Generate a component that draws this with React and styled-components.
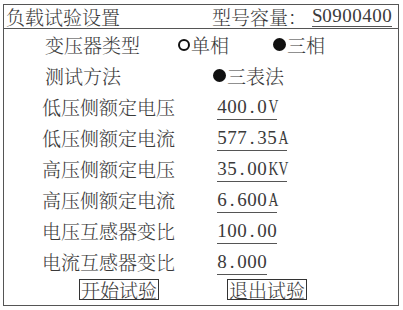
import React from "react";
import styled, { createGlobalStyle } from "styled-components";

const Global = createGlobalStyle`
  html, body { margin: 0; padding: 0; background: #fff; }
  body { font-family: "Noto Serif CJK SC", "Noto Sans CJK SC", serif; color: #3a3a3a; }
`;

const Frame = styled.div`
  box-sizing: border-box;
  margin: 4px 0 0 3px;
  width: 396px;
  height: 302px;
  border: 1px solid #555;
  display: flex;
  flex-direction: column;
`;

const TitleBar = styled.div`
  box-sizing: border-box;
  height: 24px;
  border-bottom: 1px solid #555;
  display: flex;
  align-items: center;
  justify-content: space-between;
  padding: 0 6px 0 2px;
  font-size: 19px;
  line-height: 23px;
  font-weight: 300;
`;

const Model = styled.div`
  display: flex;
  align-items: center;
`;

const Underlined = styled.span`
  display: inline-flex;
  border-bottom: 1px solid #555;
  padding: 0 0 ${(p) => p.$pad}px 0;
  margin-top: ${(p) => p.$top}px;
  margin-left: ${(p) => p.$left || 0}px;
`;

const Char = styled.span`
  display: inline-block;
  width: 10px;
  text-align: center;
  font-family: "Liberation Serif", serif;
  font-size: 19px;
  font-weight: 400;
  line-height: 19px;
  transform: scaleX(${(p) => (p.$wide ? 0.72 : 1)});
`;

const Body = styled.div`
  display: flex;
  flex-direction: column;
`;

const Row = styled.div`
  height: 31px;
  display: flex;
  align-items: center;
  padding-left: ${(p) => p.$indent}px;
  font-size: 19px;
  font-weight: 300;
`;

const Label = styled.span`
  width: ${(p) => p.$w}px;
  flex: none;
`;

const Option = styled.span`
  display: inline-flex;
  align-items: center;
  margin-right: ${(p) => p.$gap || 0}px;
`;

const Dot = styled.span`
  box-sizing: border-box;
  display: inline-block;
  width: ${(p) => (p.$on ? 13 : 12)}px;
  height: ${(p) => (p.$on ? 13 : 12)}px;
  border-radius: 50%;
  border: 2px solid #111;
  background: ${(p) => (p.$on ? "#111" : "transparent")};
  margin-right: 1px;
`;

const ButtonRow = styled.div`
  display: flex;
  padding-left: 75px;
  gap: 68px;
  margin-top: 2px;
`;

const Btn = styled.span`
  box-sizing: border-box;
  border: 1px solid #333;
  height: 21px;
  display: inline-flex;
  align-items: center;
  padding: 0 1px;
  font-size: 19px;
  font-weight: 300;
  line-height: 19px;
`;

function Mono({ text, pad = 3, top = 4, left }) {
  return (
    <Underlined $pad={pad} $top={top} $left={left}>
      {text.split("").map((c, i) => (
        <Char key={i} $wide={/[A-Z]/.test(c) && c !== "S"}>
          {c}
        </Char>
      ))}
    </Underlined>
  );
}

const rows = [
  ["低压侧额定电压", "400.0V"],
  ["低压侧额定电流", "577.35A"],
  ["高压侧额定电压", "35.00KV"],
  ["高压侧额定电流", "6.600A"],
  ["电压互感器变比", "100.00"],
  ["电流互感器变比", "8.000"],
];

export default function App() {
  return (
    <>
      <Global />
      <Frame>
        <TitleBar>
          <span>负载试验设置</span>
          <Model>
            <span>型号容量：</span>
            <Mono text="S0900400" pad={1} top={0} left={5} />
          </Model>
        </TitleBar>
        <Body>
          <Row $indent={41}>
            <Label $w={133}>变压器类型</Label>
            <Option $gap={44}>
              <Dot />单相
            </Option>
            <Option>
              <Dot $on />三相
            </Option>
          </Row>
          <Row $indent={41}>
            <Label $w={168}>测试方法</Label>
            <Option>
              <Dot $on />三表法
            </Option>
          </Row>
          {rows.map(([l, v]) => (
            <Row key={l} $indent={38}>
              <Label $w={175}>{l}</Label>
              <Mono text={v} />
            </Row>
          ))}
          <ButtonRow>
            <Btn>开始试验</Btn>
            <Btn>退出试验</Btn>
          </ButtonRow>
        </Body>
      </Frame>
    </>
  );
}
